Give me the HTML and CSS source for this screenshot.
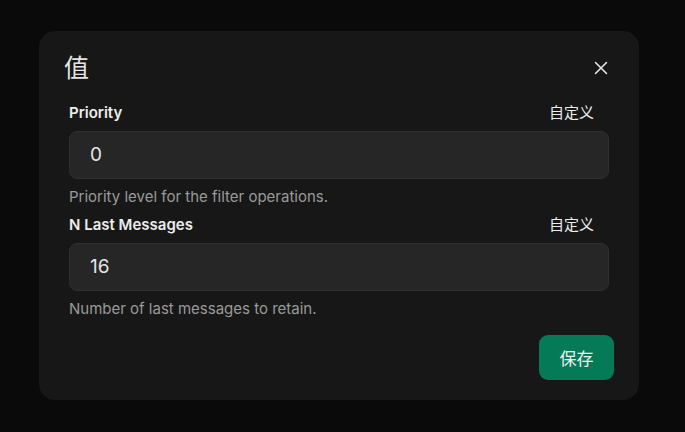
FILE: index.html
```html
<!DOCTYPE html>
<html lang="zh">
<head>
<meta charset="utf-8">
<link rel="stylesheet" href="styles.css">
</head>
<body>
<div class="page">
  <div class="dialog">
    <div class="header">
      <h2 class="title">值</h2>
      <button class="close" aria-label="close">
        <svg width="14" height="14" viewBox="0 0 14 14"><path d="M1.5 1.5 L12.5 12.5 M12.5 1.5 L1.5 12.5" stroke="#e5e5e5" stroke-width="1.6" stroke-linecap="round"/></svg>
      </button>
    </div>
    <div class="body">
      <div class="field">
        <div class="label-row"><span class="label">Priority</span><span class="custom">自定义</span></div>
        <div class="input">0</div>
        <div class="help">Priority level for the filter operations.</div>
      </div>
      <div class="field">
        <div class="label-row"><span class="label">N Last Messages</span><span class="custom">自定义</span></div>
        <div class="input">16</div>
        <div class="help">Number of last messages to retain.</div>
      </div>
    </div>
    <div class="footer">
      <button class="save">保存</button>
    </div>
  </div>
</div>
</body>
</html>
```
FILE: styles.css
```css
html, body {
  margin: 0;
  padding: 0;
  background: #0a0a0a;
  font-family: Inter, "Noto Sans CJK SC", sans-serif;
}
.page {
  width: 685px;
  height: 432px;
  padding-top: 31px;
  padding-left: 39px;
  box-sizing: border-box;
}
.dialog {
  width: 600px;
  height: 369px;
  box-sizing: border-box;
  background: #171717;
  border-radius: 16px;
  padding: 21px 25px 20px 25px;
  display: flex;
  flex-direction: column;
}
.header {
  display: flex;
  justify-content: space-between;
  align-items: center;
  height: 32px;
}
.title {
  margin: 0;
  font-size: 25px;
  line-height: 32px;
  font-weight: 400;
  color: #e5e5e5;
}
.close {
  background: none;
  border: none;
  padding: 0;
  width: 14px;
  height: 14px;
  margin-right: 6px;
  margin-top: -1px;
  display: flex;
}
.body {
  padding: 19px 5px 0 5px;
  display: flex;
  flex-direction: column;
  gap: 8px;
}
.field {
  display: flex;
  flex-direction: column;
}
.label-row {
  display: flex;
  justify-content: space-between;
  height: 20px;
  line-height: 20px;
  font-size: 15px;
  color: #ececec;
  padding-right: 15px;
}
.label {
  font-weight: 600;
}
.custom {
  font-size: 15px;
}
.input {
  margin-top: 8px;
  height: 48px;
  box-sizing: border-box;
  background: #262626;
  border: 1px solid #2f2f2f;
  border-radius: 8px;
  padding: 0 20px;
  font-size: 19px;
  line-height: 46px;
  color: #e5e5e5;
}
.help {
  margin-top: 8px;
  font-size: 15px;
  line-height: 20px;
  color: #9a9a9a;
}
.footer {
  margin-top: auto;
  display: flex;
  justify-content: flex-end;
}
.save {
  width: 75px;
  height: 45px;
  border: none;
  border-radius: 9px;
  background: #047a57;
  color: #f0f0f0;
  font-family: Inter, "Noto Sans CJK SC", sans-serif;
  font-size: 17px;
}
```
